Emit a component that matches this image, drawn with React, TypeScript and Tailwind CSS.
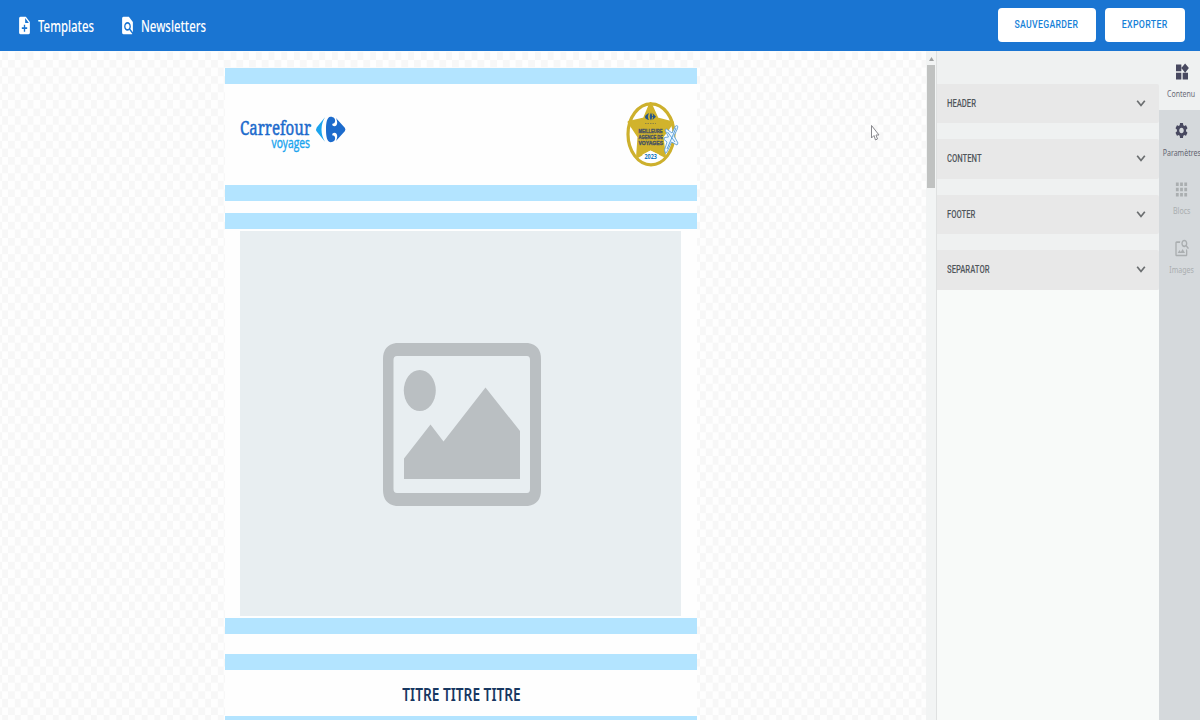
import type { ReactNode } from 'react';
import { MdNoteAdd, MdFindInPage, MdWidgets, MdSettings, MdApps, MdImageSearch } from 'react-icons/md';

const checker =
  "bg-[conic-gradient(#f7f7f7_25%,#fefefe_0_50%,#f7f7f7_0_75%,#fefefe_0)] bg-[length:12.7px_16.2px] bg-[position:8px_0.4px]";

function Stripe({ className = '' }: { className?: string }) {
  return <div className={`h-4 w-full shrink-0 bg-[#b3e4ff] ${className}`} />;
}

function NavItem({ icon, label, className }: { icon: ReactNode; label: string; className: string }) {
  return (
    <a className={`flex items-center ${className}`}>
      <span className="flex w-[13px] justify-center">{icon}</span>
      <span className="ml-[7px] origin-left scale-x-[0.712] whitespace-nowrap font-['Noto_Sans',sans-serif] text-[16px] font-medium leading-5">{label}</span>
    </a>
  );
}

function CarrefourLogo() {
  return (
    <svg className="h-[40px] w-[108px]" viewBox="239 114 108 40">
      <text x="240" y="134.700" textLength="71" lengthAdjust="spacingAndGlyphs" fill="#1c6bcc" stroke="#1c6bcc" strokeWidth=".5" fontSize="20" fontFamily="Noto Serif, DejaVu Serif, Liberation Serif, serif">Carrefour</text>
      <text x="271.500" y="148.200" textLength="38.500" lengthAdjust="spacingAndGlyphs" fill="#1ba4ee" stroke="#1ba4ee" strokeWidth=".4" fontSize="14.500" fontFamily="Open Sans, sans-serif">voyages</text>
      <path d="M325 117.300L316.700 127.500Q315.500 129.500 316.700 131.500L325 141.700Q321.500 136 321.500 129.500T325 117.300Z" fill="#1ba4ee" />
      <path d="M330.500 116.800C334 116.800 335.500 119 335 121.500Q334.700 123.400 333.300 123.400Q332.300 123.400 332.200 124.600Q332.300 126.300 334.300 126.300Q337.200 126 337.200 122.500Q337 120 335.900 118L344.800 127.700Q346 129.500 344.800 131.300L335.900 141Q337 139 337.200 136.500Q337.200 133 334.300 132.700Q332.300 132.700 332.200 134.400Q332.300 135.600 333.300 135.600Q334.700 135.600 335 137.500C335.500 140 334 142.200 330.500 142.200C326.900 142 326 136 326 129.500S326.900 117 330.500 116.800Z" fill="#1c6bcc" />
    </svg>
  );
}

function AwardBadge() {
  return (
    <svg className="h-[68px] w-[56px]" viewBox="625 100 56 68">
      <ellipse cx="651" cy="134.300" rx="23" ry="30.500" fill="#fff" stroke="#cdb02d" strokeWidth="3.200" />
      <path d="M650.500 103L657.500 118.500L673 122.500L662.500 137L665 156.500L650.500 149.500L637 157.500L638.500 137L628.500 122L644 118.500Z" fill="#d1b32c" stroke="#d1b32c" strokeWidth="2" strokeLinejoin="round" />
      <path d="M649 113Q645 115 645 117T649 120Q647 117 649 113ZM651 112.500Q648.500 117 651 120.500L652 118V115ZM652.500 113L656 116.700L652.500 120L653 117L651.500 116.700L653 116Z" fill="#27568b" />
      <path d="M645 123.500H656" stroke="#8d8342" strokeWidth="1" strokeDasharray="1.500 1" />
      <g fill="#4a5360" stroke="#4a5360" strokeWidth=".4" fontFamily="Liberation Sans, sans-serif" fontWeight="700" fontSize="6">
        <text x="638.500" y="132.500" textLength="24" lengthAdjust="spacingAndGlyphs">MEILLEURE</text>
        <text x="638.500" y="138.600" textLength="24.500" lengthAdjust="spacingAndGlyphs">AGENCE DE</text>
        <text x="638.500" y="144.700" textLength="24.500" lengthAdjust="spacingAndGlyphs">VOYAGES</text>
      </g>
      <path d="M650.500 150.500L659 154.500L658 160.500H643L642.500 154.500Z" fill="#fff" />
      <text x="644.500" y="159" textLength="12.500" lengthAdjust="spacingAndGlyphs" fill="#1674bd" fontFamily="Open Sans, sans-serif" fontWeight="700" fontSize="7">2023</text>
      <path d="M675.500 126Q678.500 124.500 677.500 128.500L674 136L678 143L677 145L671.500 142L667.500 151L665.500 153.500L664.500 150L667 142L664 139.500L664.500 137.500L668.500 137L665 130L666.500 129L672 133Z" fill="#edf7ff" stroke="#5f9fd8" strokeWidth=".9" strokeLinejoin="round" />
      <path d="M676 128L667 149M667.500 132L675 142" stroke="#5ba2dc" strokeWidth="1" />
    </svg>
  );
}

function ImagePlaceholder() {
  return (
    <div className="ml-[15.400px] mt-[2px] flex h-[385px] w-[441px] shrink-0 justify-center bg-[#e8eef1]">
      <svg className="ml-[3px] mt-[112px] h-[163px] w-[158px]" viewBox="0 0 158 163">
        <path fillRule="evenodd" fill="#babfc2" d="M13 0H145Q158 2 158 16V147Q158 161 145 163H13Q0 161 0 147V16Q0 2 13 0ZM14 13Q10.500 13 10.500 17V146Q10.500 150 14 150H144Q147 150 147 146V17Q147 13 144 13Z" />
        <ellipse cx="36.800" cy="47.500" rx="16" ry="20.500" fill="#babfc2" />
        <path d="M21 115.500L47.500 81.500L60.500 98.500L102.500 44.500L137 88V136H21Z" fill="#babfc2" />
      </svg>
    </div>
  );
}

function Section({ label }: { label: string }) {
  return (
    <div className="mb-4 flex h-[39.500px] items-center justify-between rounded-r-[2px] bg-[#e8e8e8] pl-[10px] pr-[13px]">
      <span className="origin-left scale-x-[0.73] pt-px font-[Roboto,sans-serif] text-[10.500px] font-medium text-[#50565b]">{label}</span>
      <svg className="h-[7px] w-[10px]" viewBox="0 0 10 7" fill="none" stroke="#6b6e70" strokeWidth="1.700"><path d="M1.200 .8L5 5.500L8.800 .8" /></svg>
    </div>
  );
}

function Tab({ icon, label, className, labelColor }: { icon: ReactNode; label: string; className: string; labelColor: string }) {
  return (
    <div className={`flex h-[58.700px] shrink-0 flex-col items-center pl-[4px] pt-[10px] ${className}`}>
      <span className="flex h-[22px] items-center">{icon}</span>
      <span className={`mt-[4px] scale-x-[0.74] whitespace-nowrap font-['Noto_Sans',sans-serif] text-[9.500px] leading-[14px] ${labelColor}`}>{label}</span>
    </div>
  );
}

export default function App() {
  return (
    <div className="flex h-[720px] w-[1200px] flex-col overflow-hidden font-['Noto_Sans',sans-serif]">
      <header className="flex h-[51px] shrink-0 items-center bg-[#1a75d2] text-white">
        <NavItem className="ml-[18px] w-[102px]" icon={<MdNoteAdd className="size-[21px] shrink-0 scale-x-[0.77]" />} label="Templates" />
        <NavItem className="ml-[1px] w-[100px]" icon={<MdFindInPage className="size-[21px] shrink-0 scale-x-[0.77]" />} label="Newsletters" />
        <div className="mb-px ml-auto mr-[15.500px] flex gap-[9px] font-[Roboto,sans-serif] text-[11px] font-medium text-[#1681d7]">
          <button className="flex h-[34px] w-[98px] items-center justify-center rounded-[4px] bg-white"><span className="scale-x-[0.79] tracking-[0.4px]">SAUVEGARDER</span></button>
          <button className="flex h-[34px] w-[80px] items-center justify-center rounded-[4px] bg-white"><span className="scale-x-[0.8] tracking-[0.4px]">EXPORTER</span></button>
        </div>
      </header>
      <div className="flex min-h-0 flex-1">
        <main className={`relative flex w-[926px] shrink-0 overflow-hidden pl-[225px] ${checker}`}>
          <div className="flex h-full w-[472px] flex-col overflow-hidden pt-[17px]">
            <Stripe />
            <div className="flex h-[101px] shrink-0 items-start justify-between bg-[#fefefe] pl-[14px] pr-4 pt-4">
              <div className="pt-[14px]"><CarrefourLogo /></div>
              <AwardBadge />
            </div>
            <Stripe />
            <div className="h-3 shrink-0 bg-[#fefefe]" />
            <Stripe />
            <div className="flex h-[389px] shrink-0 flex-col bg-[#fefefe]"><ImagePlaceholder /></div>
            <Stripe />
            <div className="h-5 shrink-0 bg-[#fefefe]" />
            <Stripe />
            <div className="flex h-[46px] shrink-0 items-center justify-center bg-[#fefefe] pt-[4px]">
              <h1 className="scale-x-[0.805] whitespace-nowrap text-[17px] font-semibold leading-5 text-[#173761]">TITRE TITRE TITRE</h1>
            </div>
            <Stripe />
          </div>
          <svg className="absolute left-[870px] top-[73px] h-[18px] w-[10px]" viewBox="0 0 10 18"><path d="M1.500 1.500V14L4 11.500L5.500 16L7.500 15L6 11H9Z" fill="#fff" stroke="#88888d" strokeWidth="1" /></svg>
        </main>
        <div className="flex w-[11px] shrink-0 flex-col items-center border-r border-[#dfe1e1] bg-[#f2f4f4] pt-[6px]">
          <svg className="h-[4px] w-[5px]" viewBox="0 0 5 4"><path d="M2.500 0L5 4H0Z" fill="#a0a2a2" /></svg>
          <div className="mt-[4px] h-[123px] w-2 bg-[#c0c2c1]" />
        </div>
        <aside className="w-[222px] shrink-0 bg-[#f8faf9]">
          <div className="h-[238.500px] bg-[#eff1f1] pt-[32.500px]">
            <Section label="HEADER" />
            <Section label="CONTENT" />
            <Section label="FOOTER" />
            <Section label="SEPARATOR" />
          </div>
        </aside>
        <nav className="flex w-[41px] shrink-0 flex-col items-stretch overflow-hidden bg-[#d5d9dc]">
          <Tab className="bg-[#eff1f1] text-[#484960]" labelColor="text-[#6b6c78]" icon={<MdWidgets className="size-[20px] scale-x-[0.8]" />} label="Contenu" />
          <Tab className="text-[#484960]" labelColor="text-[#646571]" icon={<MdSettings className="size-[19px] scale-x-[0.8]" />} label="Paramètres" />
          <Tab className="text-[#aaaeb0]" labelColor="text-[#aaaeb0]" icon={<MdApps className="size-[21px] scale-x-[0.8]" />} label="Blocs" />
          <Tab className="text-[#aaaeb0]" labelColor="text-[#aaaeb0]" icon={<MdImageSearch className="size-[20px] scale-x-[0.8]" />} label="Images" />
        </nav>
      </div>
    </div>
  );
}
